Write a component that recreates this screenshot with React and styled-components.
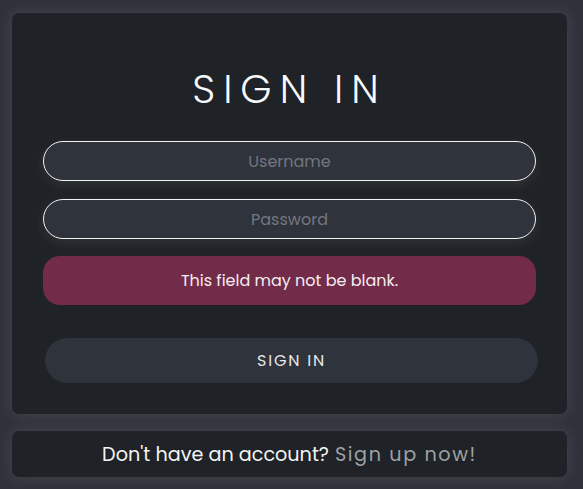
import React from 'react'
import styled, { createGlobalStyle } from 'styled-components'

const GlobalStyle = createGlobalStyle`
  body {
    margin: 0;
    background: #2f323a;
    font-family: "Poppins", "Inter", "Noto Sans", sans-serif;
  }
  * { box-sizing: border-box; }
`;

const App = () => {
    return (
        <>
            <GlobalStyle />
            <Page>
                <Card>
                    <Title>SIGN IN</Title>
                    <Form>
                        <Input placeholder="Username" />
                        <Input type="password" placeholder="Password" />
                        <ErrorBox>This field may not be blank.</ErrorBox>
                        <SubmitButton>SIGN IN</SubmitButton>
                    </Form>
                </Card>
                <Footer>
                    Don't have an account? <SignUpLink>Sign up now!</SignUpLink>
                </Footer>
            </Page>
        </>
    )
};

const Page = styled.div`
    padding: 13px 16px 12px 12px;
    display: flex;
    flex-direction: column;
    gap: 17px;
    width: 583px;
`;

const Card = styled.div`
    background: #1f2226;
    border-radius: 7px;
    box-shadow: 0 0 16px rgba(255, 255, 255, 0.11);
    padding: 52px 31px 31px;
    display: flex;
    flex-direction: column;
    height: 401px;
`;

const Title = styled.h1`
    margin: 0 0 28px;
    text-align: center;
    color: #f8f9fa;
    font-weight: 300;
    font-size: 40px;
    letter-spacing: 8px;
    line-height: 48px;
`;

const Form = styled.div`
    display: flex;
    flex-direction: column;
`;

const Input = styled.input`
    height: 40px;
    border-radius: 20px;
    border: 1px solid #f1f1f1;
    background: #2f333b;
    color: #ddd;
    text-align: center;
    font-family: inherit;
    font-size: 16px;
    margin-bottom: 18px;
    outline: none;
    box-shadow: 0 4px 12px rgba(255, 255, 255, 0.08);

    &::placeholder {
        color: #737780;
    }

    & + & {
        margin-bottom: 17px;
    }
`;

const ErrorBox = styled.div`
    height: 49px;
    border-radius: 17px;
    background: #722b48;
    color: #f4eef1;
    font-size: 16px;
    display: flex;
    align-items: center;
    justify-content: center;
`;

const SubmitButton = styled.button`
    margin: 33px -2px 0 2px;
    height: 45px;
    border: none;
    border-radius: 23px;
    background: #2f333b;
    color: #e6e7e9;
    font-family: inherit;
    font-size: 16px;
    letter-spacing: 1.8px;
    cursor: pointer;
`;

const Footer = styled.div`
    height: 46px;
    background: #1f2226;
    border-radius: 7px;
    box-shadow: 0 0 16px rgba(255, 255, 255, 0.11);
    display: flex;
    align-items: center;
    justify-content: center;
    color: #f3f4f5;
    font-size: 19.2px;
    gap: 6px;
`;

const SignUpLink = styled.a`
    color: #9ca1a7;
    letter-spacing: 1.6px;
    cursor: pointer;
`;

export default App
